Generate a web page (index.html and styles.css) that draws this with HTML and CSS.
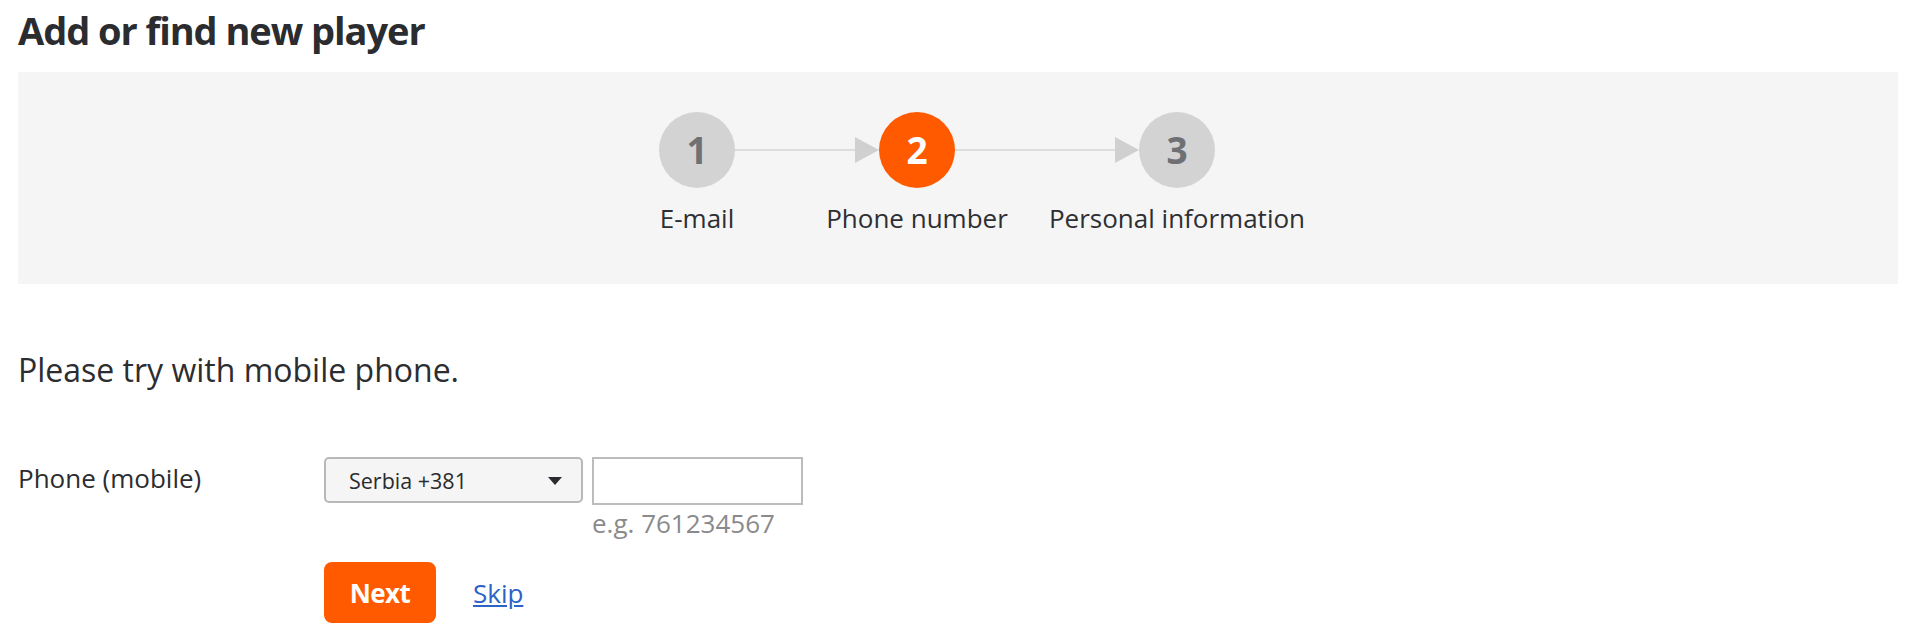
FILE: index.html
```html
<!DOCTYPE html>
<html lang="en">
<head>
<meta charset="utf-8">
<title>Add or find new player</title>
<link rel="stylesheet" href="styles.css">
</head>
<body>
  <h1 class="title">Add or find new player</h1>

  <section class="wizard">
    <div class="steps">
      <div class="circle done">1</div>
      <div class="connector"><span class="line"></span><span class="tip"></span></div>
      <div class="circle active">2</div>
      <div class="connector"><span class="line"></span><span class="tip"></span></div>
      <div class="circle">3</div>

      <div class="label">E-mail</div>
      <div class="label-gap"></div>
      <div class="label">Phone number</div>
      <div class="label-gap"></div>
      <div class="label">Personal information</div>
    </div>
  </section>

  <p class="notice">Please try with mobile phone.</p>

  <form class="phone-form">
    <label class="field-label" for="phone">Phone (mobile)</label>
    <div class="controls">
      <div class="select">
        <span class="select-text">Serbia +381</span>
        <span class="caret"></span>
      </div>
      <input class="phone-input" id="phone" type="text">
      <div class="hint">e.g. 761234567</div>
    </div>
    <div class="actions">
      <button type="button" class="btn-next">Next</button>
      <a class="skip" href="#">Skip</a>
    </div>
  </form>
</body>
</html>
```
FILE: styles.css
```css
* { box-sizing: border-box; }

html, body {
  margin: 0;
  padding: 0;
  background: #ffffff;
}

body {
  padding: 0 18px;
  font-family: "Open Sans", "Liberation Sans", sans-serif;
  color: #2c2d30;
}

.title {
  margin: 6px 0 0 0;
  font-size: 38px;
  line-height: 48px;
  font-weight: 700;
  letter-spacing: -1.05px;
  color: #2a2c30;
}

.wizard {
  margin-top: 18px;
  height: 212px;
  background: #f5f5f5;
  padding-top: 40px;
}

.steps {
  display: grid;
  grid-template-columns: 76px 144px 76px 184px 76px;
  grid-template-rows: 76px 36px;
  row-gap: 12px;
  width: max-content;
  margin: 0 auto;
  padding: 0 111px 0 69px;
}

.circle {
  width: 76px;
  height: 76px;
  border-radius: 50%;
  background: #d3d3d3;
  color: #6f7074;
  font-size: 37px;
  font-weight: 700;
  line-height: 76px;
  text-align: center;
}

.circle.active {
  background: #ff5a00;
  color: #ffffff;
}

.connector {
  display: flex;
  align-items: center;
}

.connector .line {
  flex: 1;
  height: 2px;
  background: #dddddd;
}

.connector .tip {
  width: 0;
  height: 0;
  border-left: 24px solid #d0d0d0;
  border-top: 13px solid transparent;
  border-bottom: 13px solid transparent;
}

.label {
  display: flex;
  justify-content: center;
  white-space: nowrap;
  font-size: 26px;
  line-height: 36px;
  color: #2e2f33;
}

.notice {
  margin: 64px 0 0 0;
  font-size: 32px;
  line-height: 44px;
  color: #2c2d30;
}

.phone-form {
  margin-top: 65px;
  display: grid;
  grid-template-columns: 306px auto;
  row-gap: 21px;
}

.field-label {
  padding-top: 3px;
  font-size: 26px;
  line-height: 36px;
  color: #2c2d30;
}

.controls {
  display: grid;
  grid-template-columns: 259px 211px;
  column-gap: 9px;
  align-items: start;
}

.select {
  height: 46px;
  display: flex;
  align-items: center;
  justify-content: space-between;
  padding: 0 19px 0 23px;
  background: #f5f5f5;
  border: 2px solid #b8b8b8;
  border-radius: 5px;
}

.select-text {
  font-size: 21.5px;
  line-height: 30px;
  color: #2a2b2e;
  padding-top: 2px;
}

.caret {
  width: 0;
  height: 0;
  border-left: 7px solid transparent;
  border-right: 7px solid transparent;
  border-top: 8px solid #2a2b2e;
  margin-top: 1px;
}

.phone-input {
  width: 211px;
  height: 48px;
  margin: 0;
  border: 2px solid #bcbcbc;
  border-radius: 0;
  background: #ffffff;
  font-family: inherit;
  font-size: 22px;
  padding: 0 8px;
  outline: none;
}

.hint {
  grid-column: 2;
  font-size: 26px;
  line-height: 36px;
  color: #8a8a8c;
}

.actions {
  grid-column: 2;
  display: flex;
  align-items: center;
}

.btn-next {
  width: 112px;
  height: 61px;
  padding: 0;
  border: none;
  border-radius: 8px;
  background: #ff5a00;
  color: #ffffff;
  font-family: inherit;
  font-size: 26px;
  font-weight: 700;
  letter-spacing: -0.6px;
  cursor: pointer;
}

.skip {
  margin-left: 37px;
  font-size: 26px;
  line-height: 36px;
  color: #2b63c6;
  text-decoration: underline;
}
```
